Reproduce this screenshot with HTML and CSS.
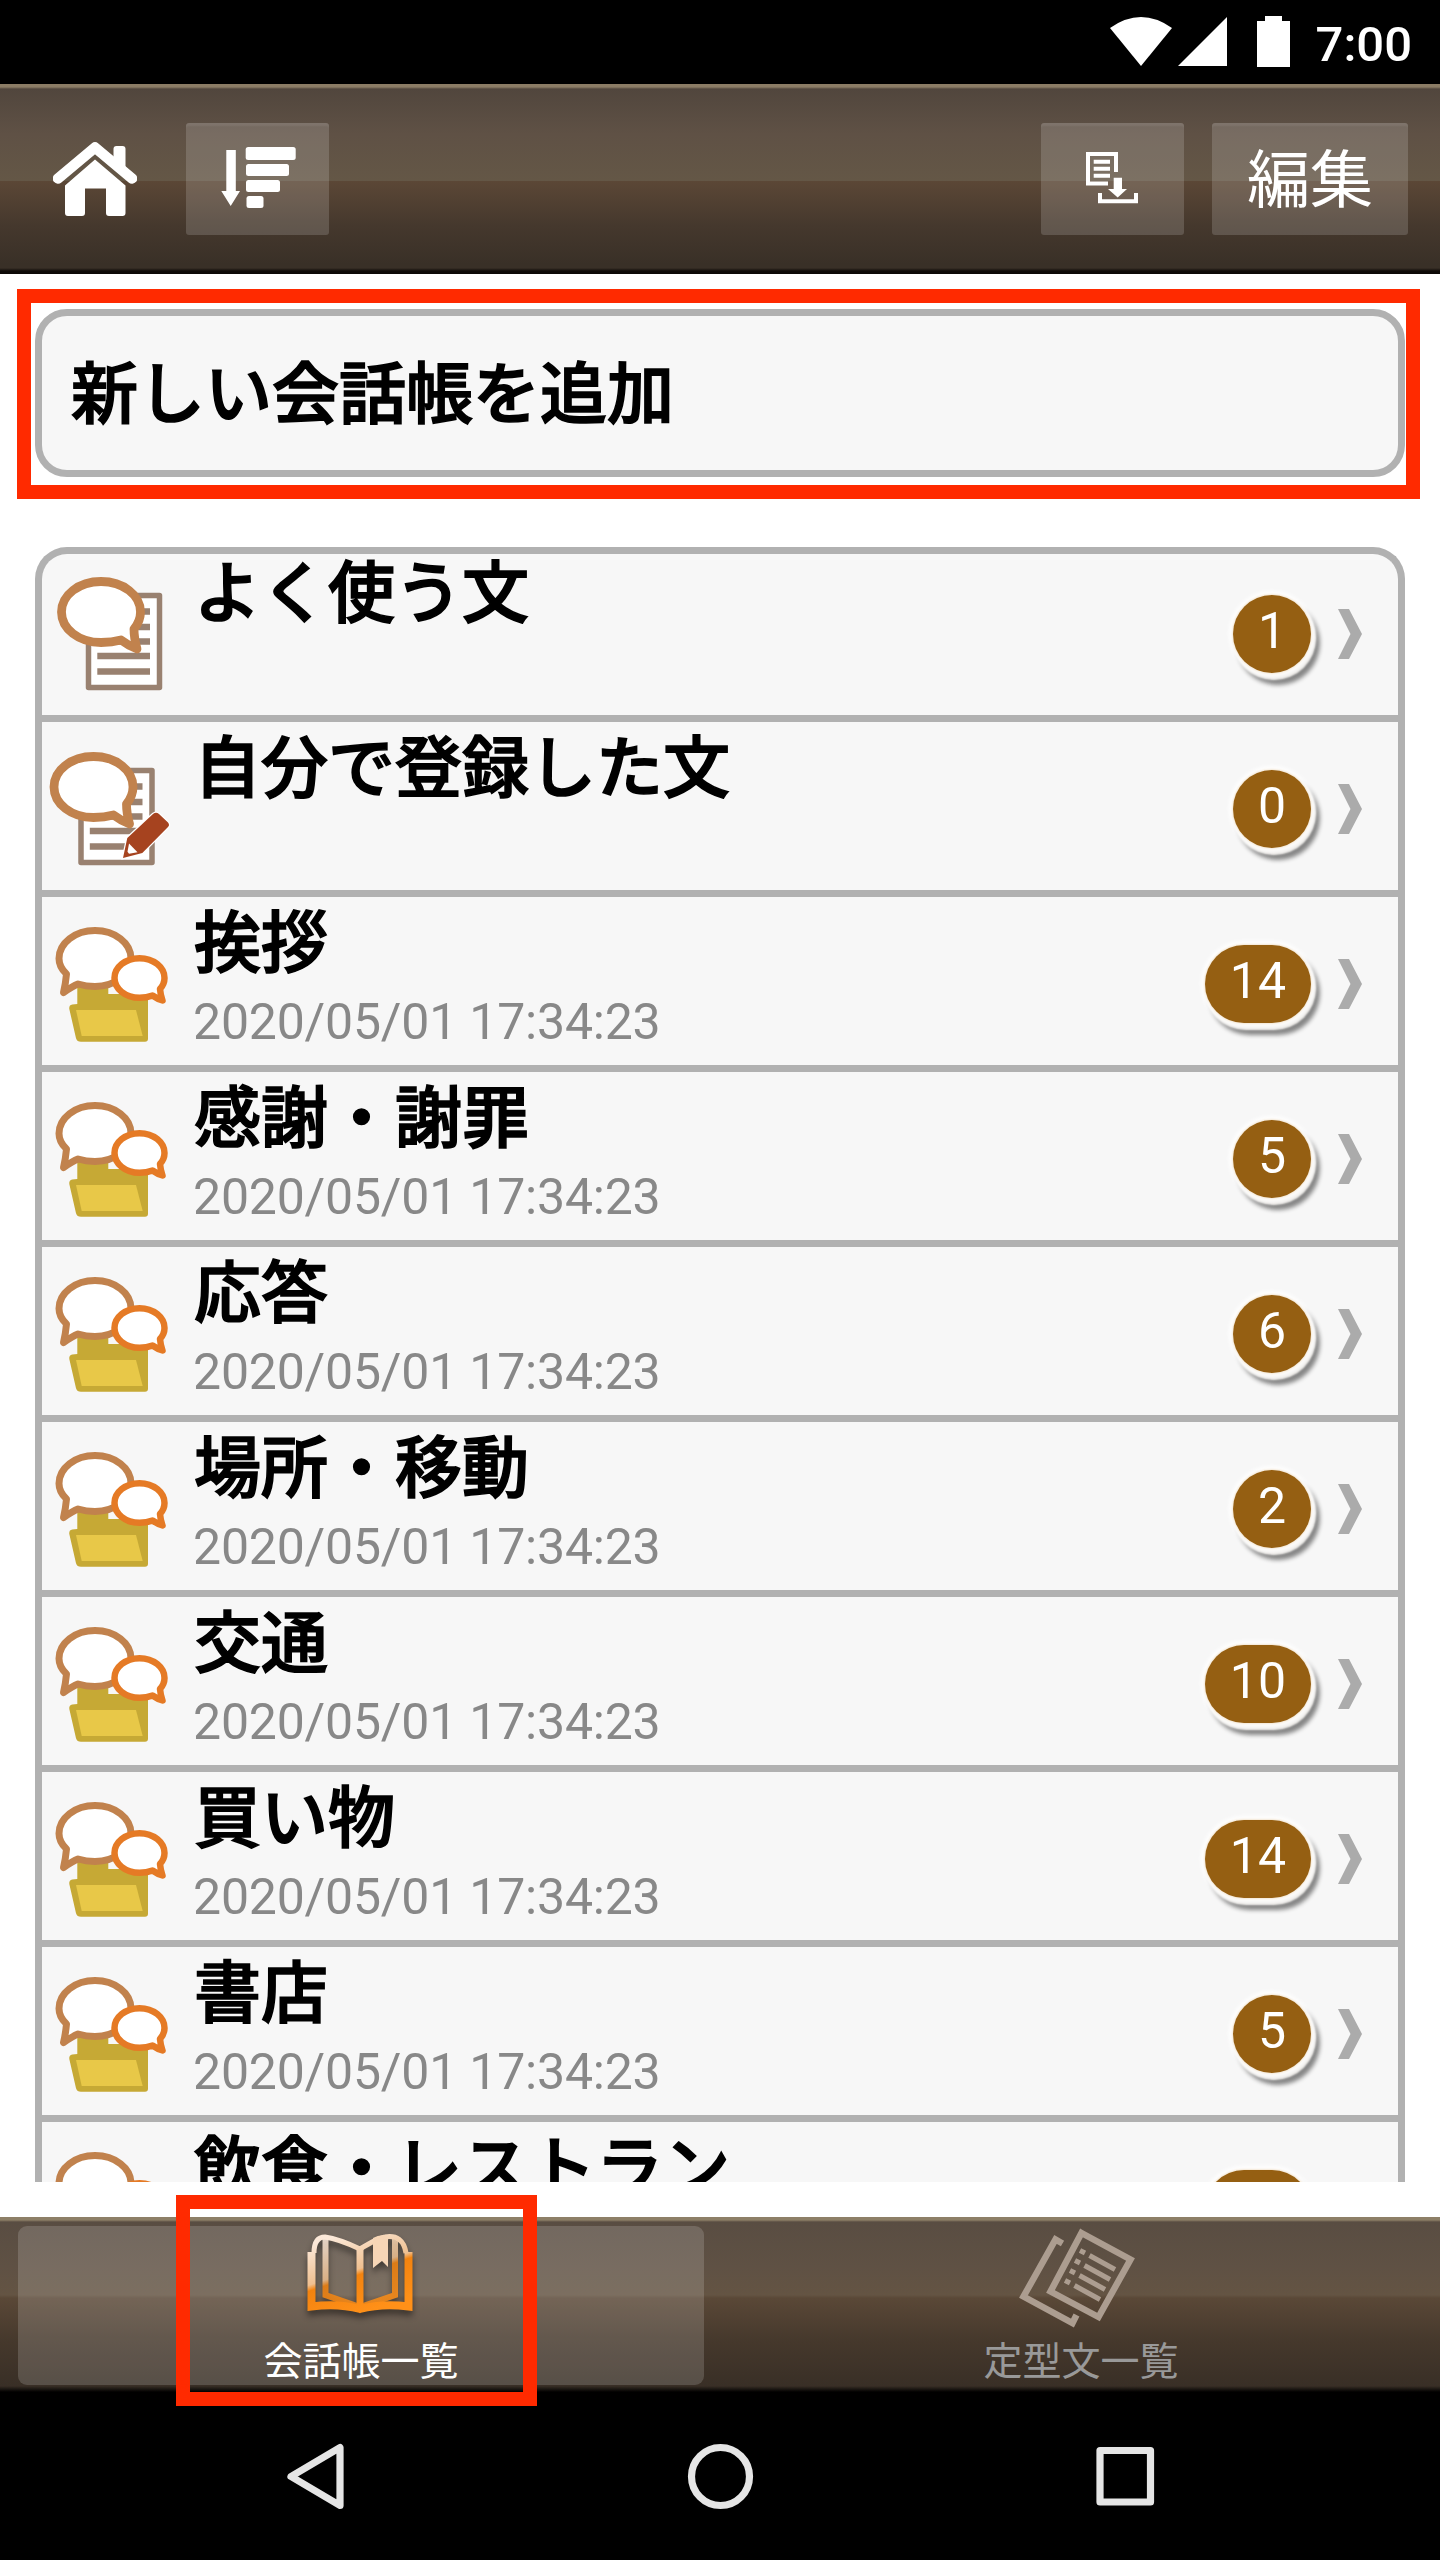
FILE: index.html
```html
<!DOCTYPE html>
<html lang="ja">
<head>
<meta charset="utf-8">
<title>会話帳一覧</title>
<link rel="stylesheet" href="styles.css">
</head>
<body>
<svg class="defs" width="0" height="0" aria-hidden="true">
  <defs>
    <symbol id="folder" viewBox="0 0 140 168">
      <path d="M35.300 90h31v7H103q3 0 3 3v41.700q0 3-3 3H39q-4 0-5-3.500L27.300 112q-.5-4 3-4.500l5-.5z" fill="#c6a935"/>
      <path d="M34 113h60l6.700 26h-61z" fill="#e8c848"/>
      <path d="M53 33.500c20 0 36 12.500 36 28s-16 28-36 28q-9 0-17-2.500-5 2-14.500 8.500 2-8 3-18.500Q17 70 17 61.500c0-15.500 16-28 36-28z" fill="#fff" stroke="#c1824d" stroke-width="7" stroke-linejoin="round"/>
      <path d="M97.500 61.200c14 0 25 9 25 19.800q0 6-4.500 11 .5 6 2.500 11.500-5-1.500-10-5-6 2.300-13 2.300c-14 0-25-9-25-19.800s11-19.800 25-19.800z" fill="#fff" stroke="#e57a25" stroke-width="6.500" stroke-linejoin="round"/>
    </symbol>
    <symbol id="note" viewBox="0 0 140 168">
      <path d="M46.500 48.500h71v92h-71z" fill="#fff" stroke="#998170" stroke-width="5.500" stroke-linejoin="round"/>
      <path d="M55.300 64.500H108M55.300 80H108M55.300 94.500H108M55.300 109H108M55.300 124.500H108" stroke="#998170" stroke-width="6.500"/>
      <path d="M59 34.500c22 0 39.500 13.500 39.500 30.500q0 9-6.500 17 0 9 3 20-8-3-16-9-9 2.500-20 2.500C37 95.500 19.500 82 19.500 65S37 34.500 59 34.500z" fill="#fff" stroke="#c1824d" stroke-width="8.800" stroke-linejoin="round"/>
    </symbol>
    <symbol id="mynote" viewBox="0 0 140 168">
      <use href="#note" x="-7.500" y="0" width="140" height="168"/>
      <path d="m81 136 4.300-20 25.700-24q3-2.500 6 0l9 8.500q2 2.500 0 4.500l-25.700 26z" fill="#a6431f" stroke="#fff" stroke-width="2.500" paint-order="stroke"/>
      <path d="m87 121.500 8.500 8.800-8.500 1.500-1.500-2z" fill="#fff"/>
    </symbol>
    <symbol id="chevron" viewBox="0 0 24 50"><path d="M0 0h11l13 25-13 25H0l12.500-25z" fill="#ababab"/></symbol>
  </defs>
</svg>
<div class="screen">
  <div class="status">
    <svg viewBox="1110 16 180 52" width="180" height="52" fill="#fff">
      <path d="M1110 28q31-22 62 0l-31 38z"/><path d="M1178 66h49V17z"/><path d="M1265 16h17v5h8v46h-33V21h8z"/>
    </svg>
    <span class="clock">7:00</span>
  </div>
  <header class="header">
    <svg class="home" viewBox="0 0 84 74" width="84" height="74" fill="#fff">
      <path d="M5 36.500 42 5.500l37 31" fill="none" stroke="#fff" stroke-width="10.500" stroke-linecap="round" stroke-linejoin="round"/>
      <path d="M60.500 20V7q0-3 3-3h6q3 0 3 3v22z"/>
      <path d="m42 17.500 30.500 26V71q0 3-3 3H56q-3 0-3-3V46.500H32V71q0 3-3 3H15q-3 0-3-3V43.500z"/>
    </svg>
    <div class="button sort">
      <svg viewBox="0 0 76 62" width="76" height="62" fill="#fff">
        <path d="M5.300 3h9.500v41H19L9.700 59 .3 44h5z"/>
        <rect x="24.700" y="0" width="50" height="13" rx="2.500"/><rect x="25" y="17" width="43" height="12" rx="2.500"/><rect x="25" y="33" width="34" height="12" rx="2.500"/><rect x="25.500" y="49" width="17" height="12" rx="2.500"/>
      </svg>
    </div>
    <div class="button copy">
      <svg viewBox="0 0 53 52" width="53" height="52">
        <path d="M22 31.500H2V2h28v18" fill="none" stroke="#fff" stroke-width="4"/>
        <path d="M7.700 9.700H24M7.700 16.700H24M7.700 23.700H24" stroke="#fff" stroke-width="4"/>
        <path d="M27.700 25.700H36V37h5l-9.300 8.500L22 37h5.700z" fill="#fff"/>
        <path d="M14 41v8.200h36V41" fill="none" stroke="#fff" stroke-width="4"/>
      </svg>
    </div>
    <div class="button edit">編集</div>
  </header>
  <main class="content">
    <div class="add">新しい会話帳を追加</div>
    <div class="list">
      <div class="row"><svg class="icon"><use href="#note"/></svg><div class="text"><div class="title">よく使う文</div></div><span class="badge">1</span><svg class="chevron"><use href="#chevron"/></svg></div>
      <div class="row"><svg class="icon"><use href="#mynote"/></svg><div class="text"><div class="title">自分で登録した文</div></div><span class="badge">0</span><svg class="chevron"><use href="#chevron"/></svg></div>
      <div class="row"><svg class="icon"><use href="#folder"/></svg><div class="text"><div class="title">挨拶</div><div class="date">2020/05/01 17:34:23</div></div><span class="badge">14</span><svg class="chevron"><use href="#chevron"/></svg></div>
      <div class="row"><svg class="icon"><use href="#folder"/></svg><div class="text"><div class="title">感謝・謝罪</div><div class="date">2020/05/01 17:34:23</div></div><span class="badge">5</span><svg class="chevron"><use href="#chevron"/></svg></div>
      <div class="row"><svg class="icon"><use href="#folder"/></svg><div class="text"><div class="title">応答</div><div class="date">2020/05/01 17:34:23</div></div><span class="badge">6</span><svg class="chevron"><use href="#chevron"/></svg></div>
      <div class="row"><svg class="icon"><use href="#folder"/></svg><div class="text"><div class="title">場所・移動</div><div class="date">2020/05/01 17:34:23</div></div><span class="badge">2</span><svg class="chevron"><use href="#chevron"/></svg></div>
      <div class="row"><svg class="icon"><use href="#folder"/></svg><div class="text"><div class="title">交通</div><div class="date">2020/05/01 17:34:23</div></div><span class="badge">10</span><svg class="chevron"><use href="#chevron"/></svg></div>
      <div class="row"><svg class="icon"><use href="#folder"/></svg><div class="text"><div class="title">買い物</div><div class="date">2020/05/01 17:34:23</div></div><span class="badge">14</span><svg class="chevron"><use href="#chevron"/></svg></div>
      <div class="row"><svg class="icon"><use href="#folder"/></svg><div class="text"><div class="title">書店</div><div class="date">2020/05/01 17:34:23</div></div><span class="badge">5</span><svg class="chevron"><use href="#chevron"/></svg></div>
      <div class="row"><svg class="icon"><use href="#folder"/></svg><div class="text"><div class="title">飲食・レストラン</div></div><span class="badge cut"></span><svg class="chevron"><use href="#chevron"/></svg></div>
    </div>
  </main>
  <nav class="tabs">
    <div class="tab active">
      <svg class="book" viewBox="0 0 130 110" width="130" height="110" fill="none">
        <defs><linearGradient id="gloss" gradientUnits="userSpaceOnUse" x1="51.500" y1="7" x2="76.500" y2="83"><stop offset="0" stop-color="#fbe8d8"/><stop offset=".47" stop-color="#f0c090"/><stop offset=".54" stop-color="#f3830f"/><stop offset="1" stop-color="#ff9018"/></linearGradient></defs>
        <path d="M15.500 26v54.500Q42 77 64 83q22-6 48.500-2.500V26" stroke="url(#gloss)" stroke-width="8"/>
        <path d="M18 27q0-16 11-16 14 2 35 12 18-11 25-12 18-3 21 16" stroke="url(#gloss)" stroke-width="5"/>
        <path d="M29.500 12v57L64 81l35-12V12" stroke="url(#gloss)" stroke-width="6" opacity=".85"/>
        <path d="M64 22v60" stroke="url(#gloss)" stroke-width="7"/>
        <path d="M77 12q7-4 15-2v31l-6-6-9 7z" fill="#f6d5b6"/>
      </svg>
      <span>会話帳一覧</span>
    </div>
    <div class="tab">
      <svg viewBox="0 0 130 110" width="130" height="110" fill="none" stroke="#ac9d90" stroke-width="6.500">
        <path d="M65.500 7 114.500 33.500 82.500 91 34.500 65.500z"/>
        <path d="m46.500 17.500-7-4L7.500 70.500l49 26.500 4-8"/>
        <path d="m64 24.500 5 2.500m4.500 2.500L99 43.500M59 34.500l5 2.500m4.500 2.500L94 53.500M54 44.500l5 2.500m4.500 2.500L89 63.500M49 54.500l5 2.500m4.500 2.500L84 73.500" stroke-width="5"/>
      </svg>
      <span>定型文一覧</span>
    </div>
  </nav>
  <div class="sysnav">
    <svg viewBox="0 0 870 68" width="870" height="68" fill="none" stroke="#e5e5e5" stroke-width="7.200" stroke-linejoin="round">
      <path d="M55 5.500v58l-49-29z"/><circle cx="435.500" cy="34.500" r="29"/><path d="M815 8.500h50.500v51.500H815z"/>
    </svg>
  </div>
  <div class="mark mark-add"></div>
  <div class="mark mark-tab"></div>
</div>
</body>
</html>
```
FILE: styles.css
```css
* { box-sizing: border-box; }
body { margin: 0; background: #fff; color: #000; font-family: "Noto Sans CJK JP", sans-serif; }
svg { display: block; flex: none; }
.defs { position: absolute; }
.screen { position: relative; width: 1440px; height: 2560px; display: flex; flex-direction: column; overflow: hidden; }

.status { height: 84px; padding: 16px 28px 0 0; background: #000; color: #fff; display: flex; justify-content: flex-end; gap: 26px; }
.clock { font: 500 49px/57px Roboto, sans-serif; }

.header {
  height: 190px; padding: 39px 32px 0 53px; display: flex; align-items: flex-start;
  background: linear-gradient(#8b7c65 0, #8b7c65 3px, #51463d 5px, #5f5145 50px, #645746 97px, #5b4736 97px, #45382d 142px, #393027 180px, #393027 184px, #0f0b08 187px, #0b0806 190px);
}
.home { margin-top: 19px; }
.button {
  width: 143px; height: 112px; border-radius: 3px; background: rgba(255, 255, 255, .155);
  box-shadow: inset 0 4px 2px -1px rgba(255, 255, 255, .07);
  display: flex; justify-content: center; color: #fff;
}
.sort { margin-left: 49px; padding: 24px 0 0 2px; }
.copy { margin-left: auto; padding-top: 29px; }
.edit { width: 196px; margin-left: 28px; font-size: 63px; line-height: 104px; }

.content { height: 1943px; padding: 35px; background: #fff; }
.add {
  height: 168px; margin-bottom: 70px; padding-left: 29px;
  border: 7px solid #b1b1b1; border-radius: 32px; background: #f7f7f7;
  font-size: 67px; font-weight: 500; line-height: 145px; -webkit-text-stroke: 1.6px #000;
}
.list {
  height: 1635px; overflow: hidden; background: #f7f7f7;
  border: 7px solid #b1b1b1; border-bottom: 0; border-radius: 32px 32px 0 0;
}
.row { height: 175px; padding-right: 36px; border-bottom: 7px solid #b1b1b1; display: flex; }
.row:first-child { margin-top: -7px; }
.icon { width: 140px; height: 168px; }
.text { flex: 1; padding-left: 11px; white-space: nowrap; }
.title { padding-left: 1px; font-size: 67px; font-weight: 500; line-height: 82px; -webkit-text-stroke: 1.6px #000; }
.date { font: 50px/86px Roboto, sans-serif; letter-spacing: -.2px; color: #888; }
.badge {
  height: 78px; margin-top: 48px; padding: 0 25px; border-radius: 39px;
  background: #955f12; color: #fff; font: 50px/72px Roboto, sans-serif;
  box-shadow: 0 0 2px 1px #f3e6d3, 0 0 4px 4px #fff, 2px 4px 2px 3px #efedea, 6px 9px 4px 3px #868686;
}
.cut { width: 106px; }
.chevron { width: 24px; height: 50px; margin: 62px 0 0 27px; }

.tabs {
  height: 175px; display: flex;
  background: linear-gradient(#8d7f67 0, #8d7f67 3px, #594d42 5px, #5f5144 50px, #645443 78px, #5a4837 81px, #45382c 125px, #392f26 169px, #0a0806 174px, #000 175px);
}
.tab {
  width: 686px; height: 159px; margin: 9px 16px 7px 18px; border-radius: 9px;
  display: flex; flex-direction: column; align-items: center; color: #999; font-size: 39px; line-height: 44px;
}
.active { background: rgba(255, 255, 255, .155); color: #fff; }
.book { filter: drop-shadow(0 5px 3px rgba(0, 0, 0, .45)); }

.sysnav { height: 168px; background: #000; display: flex; justify-content: center; align-items: center; }

/* Highlight frames that float over the screen */
.mark { position: absolute; border: 14px solid #ff2a00; }
.mark-add { left: 17px; top: 289px; width: 1403px; height: 210px; }
.mark-tab { left: 176px; top: 2195px; width: 361px; height: 211px; }
```
